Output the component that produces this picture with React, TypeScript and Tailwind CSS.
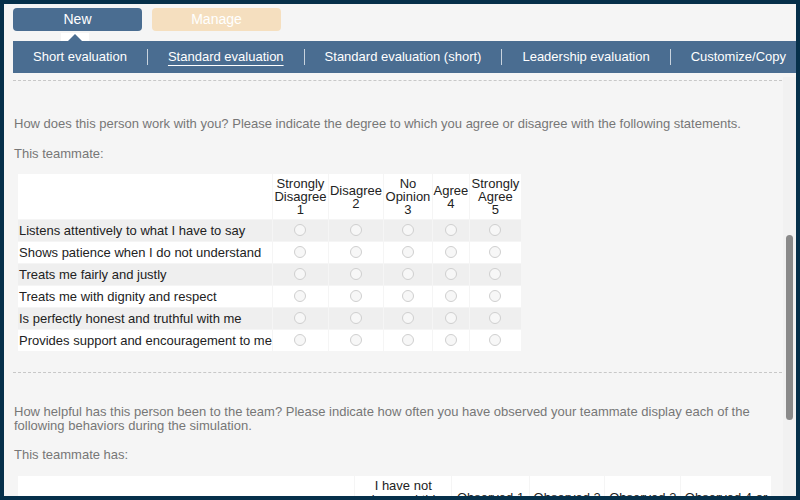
import React from "react";

const tabs = ["Short evaluation", "Standard evaluation", "Standard evaluation (short)", "Leadership evaluation", "Customize/Copy"];

const rows = [
  "Listens attentively to what I have to say",
  "Shows patience when I do not understand",
  "Treats me fairly and justly",
  "Treats me with dignity and respect",
  "Is perfectly honest and truthful with me",
  "Provides support and encouragement to me",
];

const heads = [
  { t: ["Strongly", "Disagree", "1"], w: "w-[55px]" },
  { t: ["Disagree", "2"], w: "w-[54px]" },
  { t: ["No", "Opinion", "3"], w: "w-[48px]" },
  { t: ["Agree", "4"], w: "w-[36px]" },
  { t: ["Strongly", "Agree", "5"], w: "w-[51px]" },
];

const Radio = () => (
  <span className="inline-block w-[12px] h-[12px] rounded-full border border-[#cfcfcf] bg-[#f7f7f7]" />
);

export default function App() {
  return (
    <div className="w-[800px] h-[500px] bg-[#06304a] p-[4px] overflow-hidden" style={{ fontFamily: '"Liberation Sans", Arial, sans-serif' }}>
      <div className="relative w-full h-full bg-[#f5f5f5] overflow-hidden">
        <div className="flex gap-[10px] pl-[9px] pt-[4px]">
          <div className="w-[129px] h-[23px] rounded-[4px] bg-[#4a6d91] text-white text-[14px] flex items-center justify-center">New</div>
          <div className="w-[129px] h-[23px] rounded-[4px] bg-[#f5dfbf] text-white text-[14px] flex items-center justify-center">Manage</div>
        </div>
        <div className="relative h-[10px]">
          <div className="absolute left-[57px] top-[2px] w-[28px] h-[8px] bg-white" />
          <div className="absolute left-[64px] top-[3px] w-0 h-0 border-l-[7px] border-r-[7px] border-b-[7px] border-l-transparent border-r-transparent border-b-[#4a6d91]" />
        </div>
        <div className="ml-[9px] h-[32px] bg-[#4a6d91] flex items-center text-white text-[13px]">
          {tabs.map((t, i) => (
            <React.Fragment key={t}>
              {i > 0 && <span className="w-px h-[16px] bg-[#c8d3de] mx-[20px]" />}
              <span className={i === 0 ? "ml-[20px]" : i === 1 ? "underline underline-offset-[4px]" : ""}>{t}</span>
            </React.Fragment>
          ))}
        </div>
        <div className="ml-[9px] mr-[14px] mt-[7px] border-t border-dashed border-[#c8c8c8]" />
        <div className="pl-[10px] pr-[24px] text-[13px] text-[#777]">
          <p className="mt-[33px]">How does this person work with you? Please indicate the degree to which you agree or disagree with the following statements.</p>
          <p className="mt-[10px]">This teammate:</p>
          <table className="mt-[10px] ml-[3px] border-separate border-spacing-[1px] text-[13px] text-[#222]">
            <thead>
              <tr className="bg-white">
                <th className="w-[252px] h-[45px]" />
                {heads.map((h, i) => (
                  <th key={i} className={`${h.w} font-normal leading-[13px] align-middle`}>
                    {h.t.map((l) => <div key={l}>{l}</div>)}
                  </th>
                ))}
              </tr>
            </thead>
            <tbody>
              {rows.map((r, i) => (
                <tr key={r} className={i % 2 === 0 ? "bg-[#efefef]" : "bg-white"}>
                  <td className="h-[21px] pl-[1px] text-left whitespace-nowrap">{r}</td>
                  {heads.map((_, j) => (
                    <td key={j} className="text-center align-middle leading-none"><Radio /></td>
                  ))}
                </tr>
              ))}
            </tbody>
          </table>
          <div className="-ml-[1px] mr-[-10px] mt-[20px] border-t border-dashed border-[#c8c8c8]" />
          <p className="mt-[32px] leading-[14px]">How helpful has this person been to the team? Please indicate how often you have observed your teammate display each of the following behaviors during the simulation.</p>
          <p className="mt-[12px]">This teammate has:</p>
          <table className="mt-[10px] ml-[3px] border-separate border-spacing-[1px] text-[13px] text-[#222]">
            <thead>
              <tr className="bg-white">
                <th className="w-[343px] h-[45px]" />
                <th className="w-[97px] font-normal align-top pt-[3px] leading-[14px]">I have not<br />observed this</th>
                <th className="w-[77px] font-normal">Observed 1</th>
                <th className="w-[75px] font-normal">Observed 2</th>
                <th className="w-[75px] font-normal">Observed 3</th>
                <th className="w-[90px] font-normal whitespace-nowrap">Observed 4 or</th>
              </tr>
            </thead>
          </table>
        </div>
        <div className="absolute right-0 top-[73px] bottom-0 w-[13px] bg-[#f1f1f1]">
          <div className="absolute left-[3px] top-[158px] w-[7px] h-[185px] rounded-full bg-[#8a8a8a]" />
        </div>
      </div>
    </div>
  );
}
